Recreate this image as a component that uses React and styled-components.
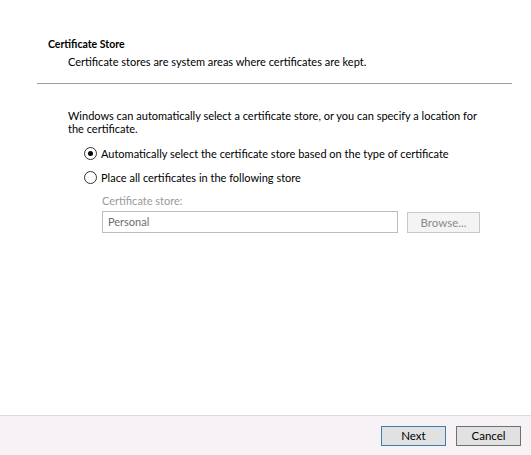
import React, { useState } from "react";
import styled, { createGlobalStyle } from "styled-components";

const Global = createGlobalStyle`
  html, body {
    margin: 0;
    padding: 0;
    background: #ffffff;
  }
  body {
    font-family: Lato, "Liberation Sans", sans-serif;
    font-size: 11px;
    color: #000;
  }
`;

const Wizard = styled.div`
  width: 531px;
  height: 455px;
  display: flex;
  flex-direction: column;
  background: #ffffff;
`;

const Header = styled.div`
  padding: 36px 0 0 48px;
  height: 83px;
  box-sizing: border-box;
`;

const Title = styled.div`
  font-weight: 700;
  font-size: 10.5px;
  line-height: 16px;
`;

const Subtitle = styled.div`
  margin: 2px 0 0 20px;
  line-height: 16px;
`;

const Rule = styled.hr`
  border: 0;
  border-top: 1px solid #a0a0a0;
  margin: 0 19px 0 37px;
  height: 0;
`;

const Body = styled.div`
  flex: 1;
  padding: 25px 40px 0 68px;
`;

const Intro = styled.p`
  margin: 0;
  line-height: 13px;
`;

const Options = styled.div`
  display: flex;
  flex-direction: column;
  gap: 8px;
  margin: 10px 0 0 16px;
`;

const Option = styled.label`
  display: flex;
  align-items: center;
  gap: 4px;
  height: 16px;
  cursor: default;
`;

const Dot = styled.span`
  width: 11px;
  height: 11px;
  border: 1px solid #333;
  border-radius: 50%;
  display: flex;
  align-items: center;
  justify-content: center;
  background: #fff;

  &::after {
    content: "";
    width: 5px;
    height: 5px;
    border-radius: 50%;
    background: ${(p) => (p.$on ? "#000" : "transparent")};
  }
`;

const StoreBlock = styled.div`
  margin: 8px 0 0 34px;
`;

const StoreLabel = styled.div`
  color: #9a9a9a;
  line-height: 16px;
`;

const StoreRow = styled.div`
  display: flex;
  align-items: center;
  gap: 9px;
  margin-top: 2px;
`;

const StoreInput = styled.div`
  width: 296px;
  height: 22px;
  box-sizing: border-box;
  border: 1px solid #bdbdbd;
  padding: 0 5px;
  line-height: 19px;
  color: #6d6d6d;
`;

const Button = styled.button`
  font-family: inherit;
  font-size: 11.5px;
  width: ${(p) => p.$w || 65}px;
  height: ${(p) => p.$h || 20}px;
  padding: 0;
  box-sizing: border-box;
  border: 1px solid ${(p) => (p.disabled ? "#c8c8c8" : p.$primary ? "#3c7fb1" : "#707070")};
  background: ${(p) => (p.disabled ? "#f4f4f4" : "#e1e1e1")};
  color: ${(p) => (p.disabled ? "#8a8a8a" : "#000")};
  border-radius: 0;
`;

const Footer = styled.div`
  height: 40px;
  box-sizing: border-box;
  border-top: 1px solid #dcdcdc;
  background: #f6f2f5;
  display: flex;
  justify-content: flex-end;
  align-items: center;
  gap: 10px;
  padding: 0 10px 0 0;
`;

export default function App() {
  const [auto, setAuto] = useState(true);
  return (
    <Wizard>
      <Global />
      <Header>
        <Title>Certificate Store</Title>
        <Subtitle>Certificate stores are system areas where certificates are kept.</Subtitle>
      </Header>
      <Rule />
      <Body>
        <Intro>
          Windows can automatically select a certificate store, or you can specify a location for
          the certificate.
        </Intro>
        <Options>
          <Option onClick={() => setAuto(true)}>
            <Dot $on={auto} />
            Automatically select the certificate store based on the type of certificate
          </Option>
          <Option onClick={() => setAuto(false)}>
            <Dot $on={!auto} />
            Place all certificates in the following store
          </Option>
        </Options>
        <StoreBlock>
          <StoreLabel>Certificate store:</StoreLabel>
          <StoreRow>
            <StoreInput>Personal</StoreInput>
            <Button disabled $w={73} $h={21}>Browse...</Button>
          </StoreRow>
        </StoreBlock>
      </Body>
      <Footer>
        <Button $primary>Next</Button>
        <Button>Cancel</Button>
      </Footer>
    </Wizard>
  );
}
